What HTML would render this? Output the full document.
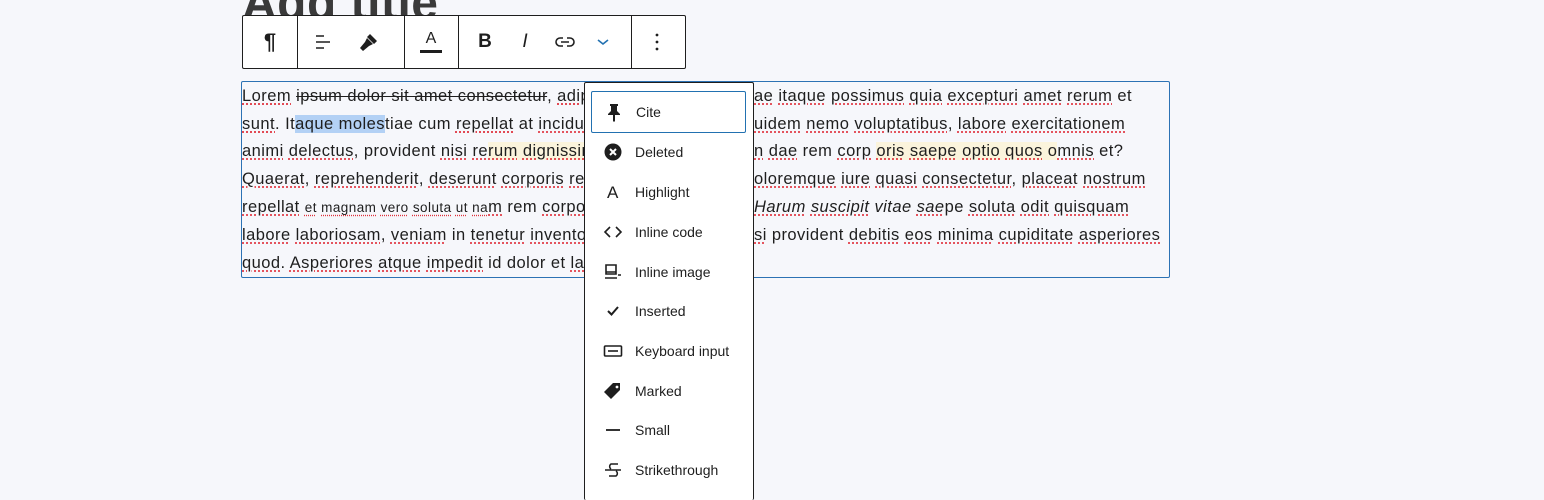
<!DOCTYPE html>
<html><head><meta charset="utf-8"><style>
*{margin:0;padding:0;box-sizing:border-box}
html,body{width:1544px;height:500px;overflow:hidden}
body{background:#f6f7fb;position:relative;font-family:"Liberation Sans",sans-serif;color:#1e1e1e}
.title{position:absolute;left:242px;top:-24px;font-size:48px;font-weight:bold;color:#3a3a3a;letter-spacing:.5px}
.tb{position:absolute;left:242px;top:15px;width:444px;height:54px;background:#fff;border:1px solid #1e1e1e;border-radius:2px}
.dv{position:absolute;top:0;width:1px;height:52px;background:#1e1e1e}
.ic{position:absolute;top:0;height:52px;display:flex;align-items:center;justify-content:center}
.box{position:absolute;left:241px;top:81px;width:929px;height:197px;border:1px solid #2c72b4;border-radius:2px}
.ln{position:absolute;white-space:nowrap;font-size:16.5px;letter-spacing:.45px;line-height:20px}
.u{text-decoration:underline dotted #e0323c;text-underline-offset:3px}
.menu{position:absolute;left:584px;top:82px;width:170px;height:418px;background:#fff;border:1px solid #1e1e1e;border-bottom:none;border-radius:2px}
.it{position:absolute;left:6px;width:155px;height:40px;display:flex;align-items:center;font-size:14px;color:#1e1e1e}
.it svg{margin-left:12px;margin-right:12px;width:20px;height:20px}
</style></head><body>
<div class="title">Add title</div>
<div class="tb">
 <div class="dv" style="left:54px"></div><div class="dv" style="left:161px"></div><div class="dv" style="left:215px"></div><div class="dv" style="left:388px"></div>
 <div class="ic" style="left:14px;width:26px;font-size:22px;font-weight:bold">¶</div>
 <div class="ic" style="left:70px;width:20px"><svg width="20" height="20"><path d="M3 4h8M3 10h14M3 16h8" stroke="#1e1e1e" stroke-width="1.6"/></svg></div>
 <div class="ic" style="left:114px;width:24px"><svg width="24" height="24" viewBox="0 0 24 24"><path d="M13 4l7 7-3 3-7-7zM10 8l6 6-4 2-4-4zM8 12l4 4-6 5-3-3z" fill="#1e1e1e"/></svg></div>
 <div class="ic" style="left:176px;width:24px;flex-direction:column"><span style="font-size:16px;line-height:16px">A</span><span style="display:block;width:22px;height:3px;background:#1e1e1e;margin-top:3px"></span></div>
 <div class="ic" style="left:234px;width:16px;font-size:19px;font-weight:bold">B</div>
 <div class="ic" style="left:276px;width:12px;font-size:19px;font-style:italic">I</div>
 <div class="ic" style="left:310px;width:24px"><svg width="24" height="24" viewBox="0 0 24 24"><path d="M10 8H7a4 4 0 000 8h3M14 8h3a4 4 0 010 8h-3M8 12h8" fill="none" stroke="#1e1e1e" stroke-width="1.6"/></svg></div>
 <div class="ic" style="left:352px;width:16px"><svg width="14" height="10"><path d="M2 3l5 4 5-4" fill="none" stroke="#2271b1" stroke-width="1.6"/></svg></div>
 <div class="ic" style="left:408px;width:12px"><svg width="4" height="18"><circle cx="2" cy="2" r="1.4" fill="#1e1e1e"/><circle cx="2" cy="9" r="1.4" fill="#1e1e1e"/><circle cx="2" cy="16" r="1.4" fill="#1e1e1e"/></svg></div>
</div>
<div class="box"></div>
<div class="ln" style="left:242px;top:86px"><span class="u">Lorem</span> <span class="u" style="text-decoration:line-through">ipsum dolor sit amet consectetur</span>, <span class="u">adipisci</span></div>
<div class="ln" style="left:242px;top:114px"><span class="u">sunt</span>. It<span style="background:#b3d1f5">aque moles</span>tiae cum <span class="u">repellat</span> at <span class="u">incidunt</span></div>
<div class="ln" style="left:242px;top:141px"><span class="u">animi</span> <span class="u">delectus</span>, provident <span class="u">nisi</span> <span class="u">re</span><span style="background:#fbf4dc"><span class="u">rum</span> <span class="u">dignissimos</span></span></div>
<div class="ln" style="left:242px;top:169px"><span class="u">Quaerat</span>, <span class="u">reprehenderit</span>, <span class="u">deserunt</span> <span class="u">corporis</span> <span class="u">recusandae</span></div>
<div class="ln" style="left:242px;top:197px"><span class="u">repellat</span> <span style="font-size:13.5px"><span class="u">et</span> <span class="u">magnam</span> <span class="u">vero</span> <span class="u">soluta</span> <span class="u">ut</span> <span class="u">na</span></span><span class="u">m</span> rem <span class="u">corporis</span></div>
<div class="ln" style="left:242px;top:225px"><span class="u">labore</span> <span class="u">laboriosam</span>, <span class="u">veniam</span> in <span class="u">tenetur</span> <span class="u">inventore</span></div>
<div class="ln" style="left:242px;top:253px"><span class="u">quod</span>. <span class="u">Asperiores</span> <span class="u">atque</span> <span class="u">impedit</span> id dolor et <span class="u">labore</span></div>
<div class="ln" style="left:754px;top:86px"><span class="u">ae</span> <span class="u">itaque</span> <span class="u">possimus</span> <span class="u">quia</span> <span class="u">excepturi</span> <span class="u">amet</span> <span class="u">rerum</span> et</div>
<div class="ln" style="left:754px;top:114px"><span class="u">uidem</span> <span class="u">nemo</span> <span class="u">voluptatibus</span>, <span class="u">labore</span> <span class="u">exercitationem</span></div>
<div class="ln" style="left:754px;top:141px"><span class="u">n</span> <span class="u">dae</span> rem <span class="u">corp</span> <span style="background:#fbf4dc"><span class="u">oris</span> <span class="u">saepe</span> <span class="u">optio</span> <span class="u">quos</span> o</span><span class="u">mnis</span> et?</div>
<div class="ln" style="left:754px;top:169px"><span class="u">oloremque</span> <span class="u">iure</span> <span class="u">quasi</span> <span class="u">consectetur</span>, <span class="u">placeat</span> <span class="u">nostrum</span></div>
<div class="ln" style="left:754px;top:197px;font-style:italic"><span class="u">Harum</span> <span class="u">suscipit</span> vitae <span class="u">sae</span><span style="font-style:normal">pe <span class="u">soluta</span> <span class="u">odit</span> <span class="u">quisquam</span></span></div>
<div class="ln" style="left:754px;top:225px"><span class="u">si</span> provident <span class="u">debitis</span> <span class="u">eos</span> <span class="u">minima</span> <span class="u">cupiditate</span> <span class="u">asperiores</span></div>
<div class="menu">
 <div class="it" style="top:8px;border:1.5px solid #2271b1;border-radius:2px;height:42px"><svg viewBox="0 0 20 20"><path d="M6 2h8v2h-1v5l3 3v1h-5v6l-1 1-1-1v-6H4v-1l3-3V4H6z" fill="#1e1e1e"/></svg>Cite</div>
 <div class="it" style="top:49px"><svg viewBox="0 0 20 20"><circle cx="10" cy="10" r="8.5" fill="#1e1e1e"/><path d="M7 7l6 6M13 7l-6 6" stroke="#fff" stroke-width="2"/></svg>Deleted</div>
 <div class="it" style="top:89px"><svg viewBox="0 0 20 20"><text x="4" y="16" font-size="17" font-family="Liberation Sans" fill="#1e1e1e">A</text></svg>Highlight</div>
 <div class="it" style="top:129px"><svg viewBox="0 0 20 20"><path d="M7 5L2 10l5 5M13 5l5 5-5 5" fill="none" stroke="#1e1e1e" stroke-width="1.6"/></svg>Inline code</div>
 <div class="it" style="top:169px"><svg viewBox="0 0 20 20"><path d="M3 3h10v9H3z" fill="none" stroke="#1e1e1e" stroke-width="1.6"/><path d="M3 10h10M2 16h12M15 13h3" stroke="#1e1e1e" stroke-width="1.6"/></svg>Inline image</div>
 <div class="it" style="top:208px"><svg viewBox="0 0 20 20"><path d="M5 10l3.5 3.5L15 6" fill="none" stroke="#1e1e1e" stroke-width="2"/></svg>Inserted</div>
 <div class="it" style="top:248px"><svg viewBox="0 0 20 20"><rect x="1.5" y="5" width="17" height="10" rx="1" fill="none" stroke="#1e1e1e" stroke-width="1.6"/><path d="M5 10h10" stroke="#1e1e1e" stroke-width="1.6"/></svg>Keyboard input</div>
 <div class="it" style="top:288px"><svg viewBox="0 0 20 20"><path d="M10 2h7v7l-9 9-7-7z" fill="#1e1e1e"/><circle cx="14" cy="6" r="1.4" fill="#fff"/></svg>Marked</div>
 <div class="it" style="top:327px"><svg viewBox="0 0 20 20"><path d="M3 10h14" stroke="#1e1e1e" stroke-width="1.8"/></svg>Small</div>
 <div class="it" style="top:367px"><svg viewBox="0 0 20 20"><path d="M15 4H8a3 3 0 000 5M2 10h16M6 16h7a3 3 0 000-5" fill="none" stroke="#1e1e1e" stroke-width="1.5"/></svg>Strikethrough</div>
</div>
</body></html>
